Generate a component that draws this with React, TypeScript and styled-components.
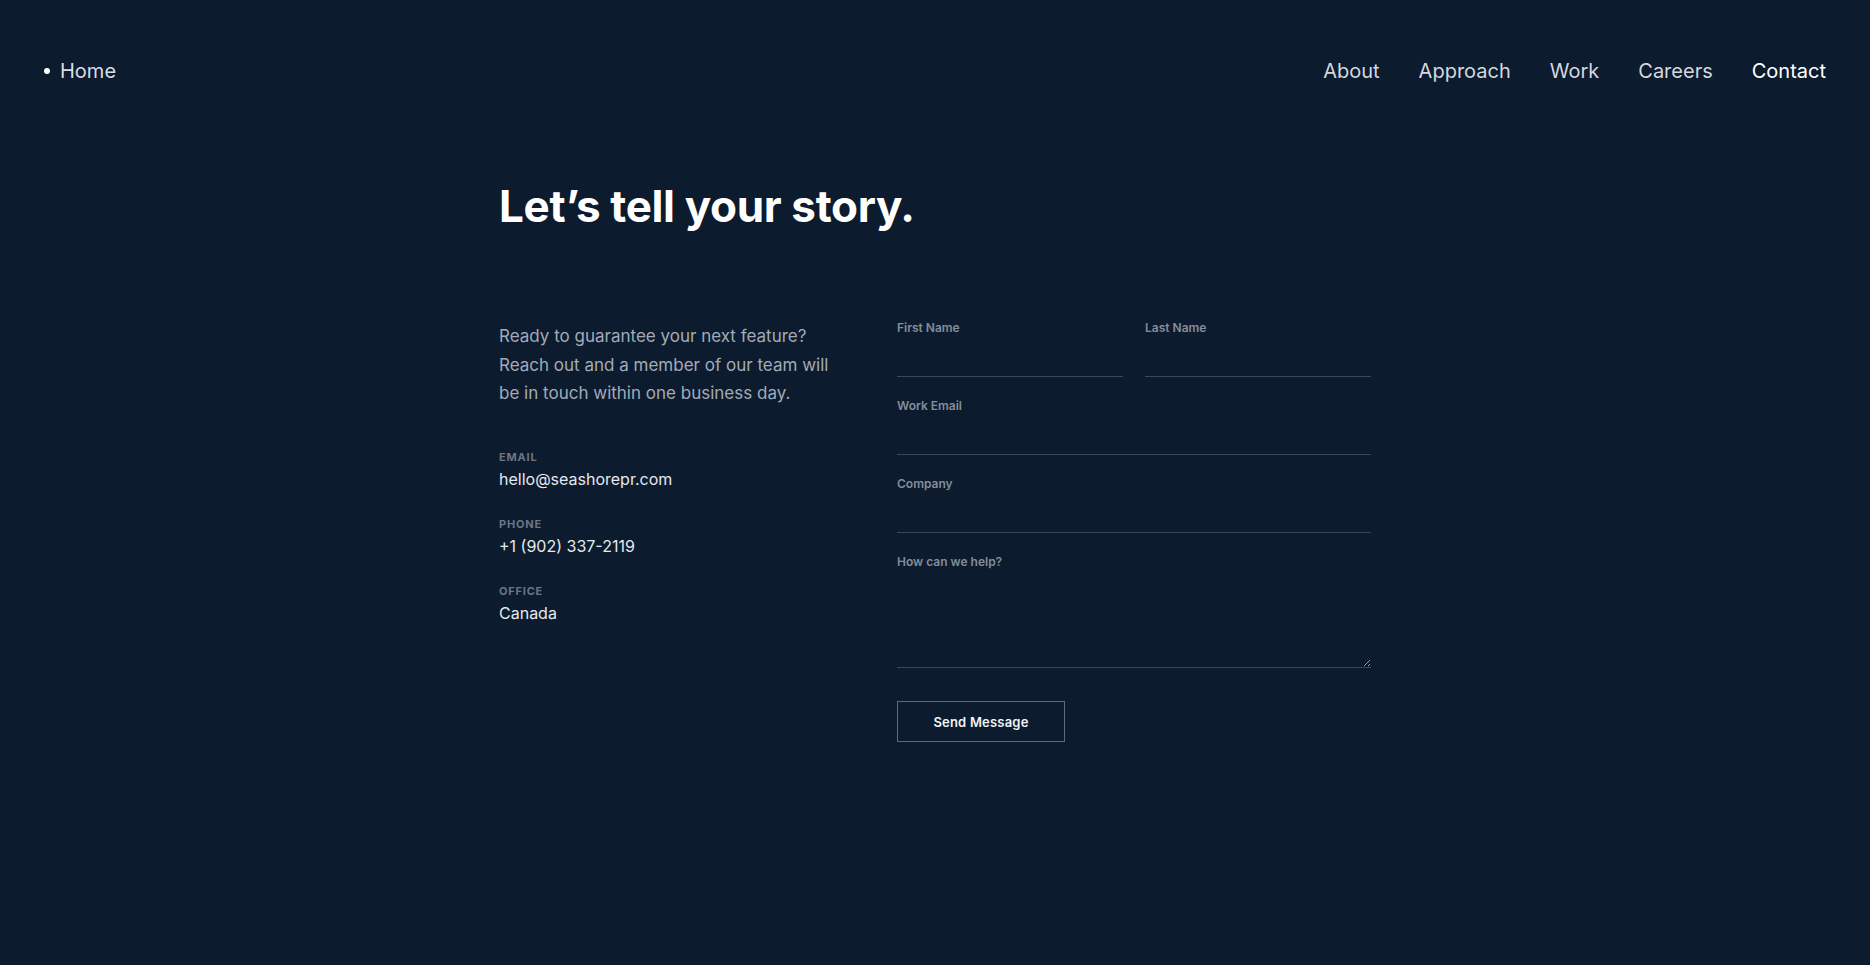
import React from 'react'
import styled, { createGlobalStyle } from 'styled-components'

const GlobalStyle = createGlobalStyle`
  html, body {
    margin: 0;
    padding: 0;
    background: #0c1b2e;
  }
  body {
    font-family: Inter, "Noto Sans", sans-serif;
    color: #ffffff;
    -webkit-font-smoothing: antialiased;
  }
  * {
    box-sizing: border-box;
  }
`

const navLinks = ['About', 'Approach', 'Work', 'Careers', 'Contact']

const contacts = [
  { label: 'Email', value: 'hello@seashorepr.com' },
  { label: 'Phone', value: '+1 (902) 337-2119' },
  { label: 'Office', value: 'Canada' },
]

function App() {
  return (
    <Page>
      <GlobalStyle />
      <Header>
        <HomeLink href="#">Home</HomeLink>
        <Nav>
          {navLinks.map((link) => (
            <NavLink key={link} href="#" $active={link === 'Contact'}>
              {link}
            </NavLink>
          ))}
        </Nav>
      </Header>

      <Main>
        <Title>Let’s tell your story.</Title>
        <Columns>
          <Info>
            <Intro>
              Ready to guarantee your next feature? Reach out and a member of our team will be in
              touch within one business day.
            </Intro>
            <ContactList>
              {contacts.map((c) => (
                <ContactItem key={c.label}>
                  <ContactLabel>{c.label}</ContactLabel>
                  <ContactValue>{c.value}</ContactValue>
                </ContactItem>
              ))}
            </ContactList>
          </Info>

          <Form onSubmit={(e) => e.preventDefault()}>
            <Row>
              <Field>
                <Label htmlFor="first">First Name</Label>
                <Input id="first" type="text" />
              </Field>
              <Field>
                <Label htmlFor="last">Last Name</Label>
                <Input id="last" type="text" />
              </Field>
            </Row>
            <Field>
              <Label htmlFor="email">Work Email</Label>
              <Input id="email" type="email" />
            </Field>
            <Field>
              <Label htmlFor="company">Company</Label>
              <Input id="company" type="text" />
            </Field>
            <Field>
              <Label htmlFor="help">How can we help?</Label>
              <TextArea id="help" />
            </Field>
            <SubmitButton type="submit">Send Message</SubmitButton>
          </Form>
        </Columns>
      </Main>
    </Page>
  )
}

export default App

const Page = styled.div`
  min-height: 100vh;
  background: #0c1b2e;
`

const Header = styled.header`
  display: flex;
  justify-content: space-between;
  align-items: center;
  padding: 59px 44px 0 44px;
`

const HomeLink = styled.a`
  display: flex;
  align-items: center;
  gap: 10px;
  font-size: 20px;
  line-height: 24px;
  color: #d9dde4;
  text-decoration: none;

  &::before {
    content: '';
    width: 6px;
    height: 6px;
    border-radius: 50%;
    background: #ffffff;
  }
`

const Nav = styled.nav`
  display: flex;
  gap: 39px;
`

const NavLink = styled.a<{ $active?: boolean }>`
  font-size: 20px;
  line-height: 24px;
  color: ${(p) => (p.$active ? '#ffffff' : '#d3d8df')};
  text-decoration: none;
`

const Main = styled.main`
  width: 872px;
  margin: 0 auto;
  padding-top: 97px;
`

const Title = styled.h1`
  margin: 0 0 87px;
  font-size: 44px;
  line-height: 53px;
  font-weight: 700;
  letter-spacing: -0.35px;
  color: #ffffff;
`

const Columns = styled.div`
  display: grid;
  grid-template-columns: 358px minmax(0, 1fr);
  gap: 40px;
`

const Info = styled.div`
  display: flex;
  flex-direction: column;
  padding-top: 2px;
`

const Intro = styled.p`
  margin: 0 0 42px;
  max-width: 345px;
  font-size: 17px;
  line-height: 28.5px;
  color: #a3abb8;
`

const ContactList = styled.div`
  display: flex;
  flex-direction: column;
  gap: 26px;
`

const ContactItem = styled.div`
  display: flex;
  flex-direction: column;
  gap: 3px;
`

const ContactLabel = styled.span`
  font-size: 11px;
  line-height: 14px;
  font-weight: 700;
  letter-spacing: 0.8px;
  text-transform: uppercase;
  color: #6c7686;
`

const ContactValue = styled.span`
  font-size: 16px;
  line-height: 24px;
  color: #e6e9ee;
`

const Form = styled.form`
  display: flex;
  flex-direction: column;
  gap: 21px;
`

const Row = styled.div`
  display: grid;
  grid-template-columns: minmax(0, 1fr) minmax(0, 1fr);
  gap: 22px;
`

const Field = styled.div`
  display: flex;
  flex-direction: column;
  min-width: 0;
`

const Label = styled.label`
  font-size: 12px;
  line-height: 16px;
  font-weight: 600;
  color: #848d9b;
`

const Input = styled.input`
  width: 100%;
  min-width: 0;
  height: 41px;
  padding: 0;
  border: none;
  border-bottom: 1px solid #3b4758;
  background: transparent;
  color: #ffffff;
  font: inherit;
  font-size: 16px;
  outline: none;
`

const TextArea = styled.textarea`
  width: 100%;
  height: 98px;
  padding: 0;
  border: none;
  border-bottom: 1px solid #3b4758;
  background: transparent;
  color: #ffffff;
  font: inherit;
  font-size: 16px;
  outline: none;
  resize: vertical;
  color-scheme: dark;
`

const SubmitButton = styled.button`
  align-self: flex-start;
  margin-top: 12px;
  width: 168px;
  height: 41px;
  border: 1px solid #5f6a79;
  background: transparent;
  color: #f2f4f7;
  font-family: Inter, sans-serif;
  font-size: 13px;
  font-weight: 600;
  letter-spacing: 0.2px;
  cursor: pointer;
`
